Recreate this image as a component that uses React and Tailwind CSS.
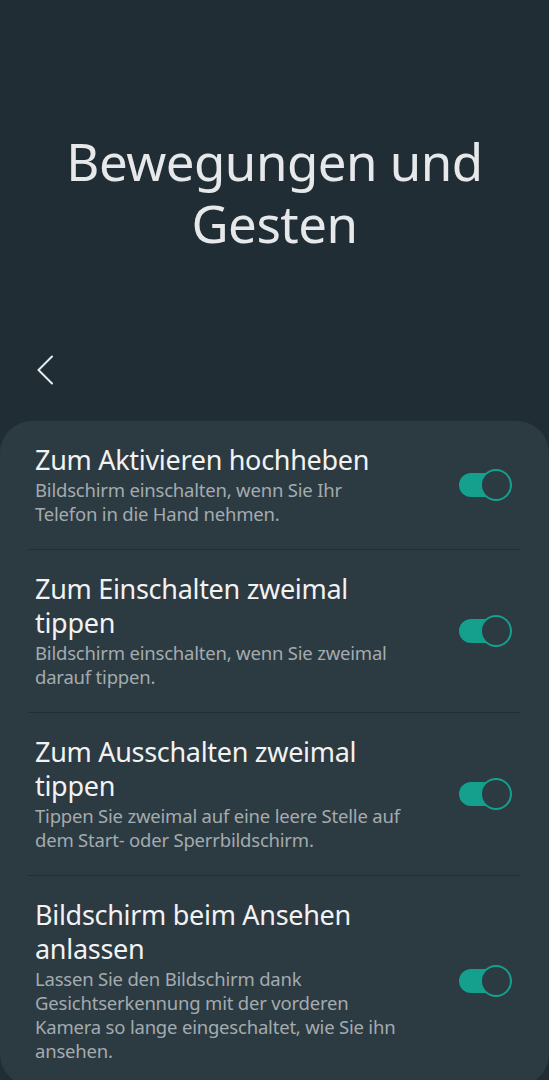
const ITEMS = [
  {
    title: ['Zum Aktivieren hochheben'],
    desc: ['Bildschirm einschalten, wenn Sie Ihr', 'Telefon in die Hand nehmen.'],
  },
  {
    title: ['Zum Einschalten zweimal', 'tippen'],
    desc: ['Bildschirm einschalten, wenn Sie zweimal', 'darauf tippen.'],
  },
  {
    title: ['Zum Ausschalten zweimal', 'tippen'],
    desc: ['Tippen Sie zweimal auf eine leere Stelle auf', 'dem Start- oder Sperrbildschirm.'],
  },
  {
    title: ['Bildschirm beim Ansehen', 'anlassen'],
    desc: [
      'Lassen Sie den Bildschirm dank',
      'Gesichtserkennung mit der vorderen',
      'Kamera so lange eingeschaltet, wie Sie ihn',
      'ansehen.',
    ],
  },
];

function Toggle() {
  return (
    <div className="relative h-[32px] w-[53px] shrink-0">
      <div className="absolute left-0 top-[4px] h-[24px] w-[44px] rounded-full bg-[#14a08c]" />
      <div className="absolute right-0 top-0 h-[32px] w-[32px] rounded-full border-2 border-[#14a08c] bg-[#2c3a42]" />
    </div>
  );
}

function Row({ item, last }) {
  return (
    <div className={last ? '' : 'border-b border-[#222e35]'}>
      <div className="flex items-center gap-4 pb-[23px] pl-[7px] pr-[9px] pt-[22px]">
        <div className="min-w-0 flex-1">
          <div className="text-[27px] leading-[34px] tracking-[-0.3px] text-[#f2f2f2]">
            {item.title.map((l) => (
              <div key={l} className="whitespace-nowrap">{l}</div>
            ))}
          </div>
          <div className="mt-[1px] text-[18.5px] leading-[24px] tracking-[-0.2px] text-[#a4abaf]">
            {item.desc.map((l) => (
              <div key={l} className="whitespace-nowrap">{l}</div>
            ))}
          </div>
        </div>
        <Toggle />
      </div>
    </div>
  );
}

export default function App() {
  return (
    <div
      className="h-[1080px] w-[549px] overflow-hidden bg-[#212d35]"
      style={{ fontFamily: '"Noto Sans", Roboto, sans-serif' }}
    >
      <h1 className="pt-[130px] text-center text-[51px] leading-[62px] tracking-[-0.5px] text-[#e6e8e9]">
        Bewegungen und
        <br />
        Gesten
      </h1>

      <div className="mt-[101px] flex h-[30px] items-center pl-[37px]">
        <svg width="16" height="30" viewBox="0 0 16 30" fill="none">
          <path d="M15 1.5 L1.5 15 L15 28.5" stroke="#e8eaeb" strokeWidth="2" strokeLinecap="round" strokeLinejoin="round" />
        </svg>
      </div>

      <div className="mt-[36px] rounded-[32px] bg-[#2c3a42] px-[28px]">
        {ITEMS.map((item, i) => (
          <Row key={i} item={item} last={i === ITEMS.length - 1} />
        ))}
      </div>
    </div>
  );
}
